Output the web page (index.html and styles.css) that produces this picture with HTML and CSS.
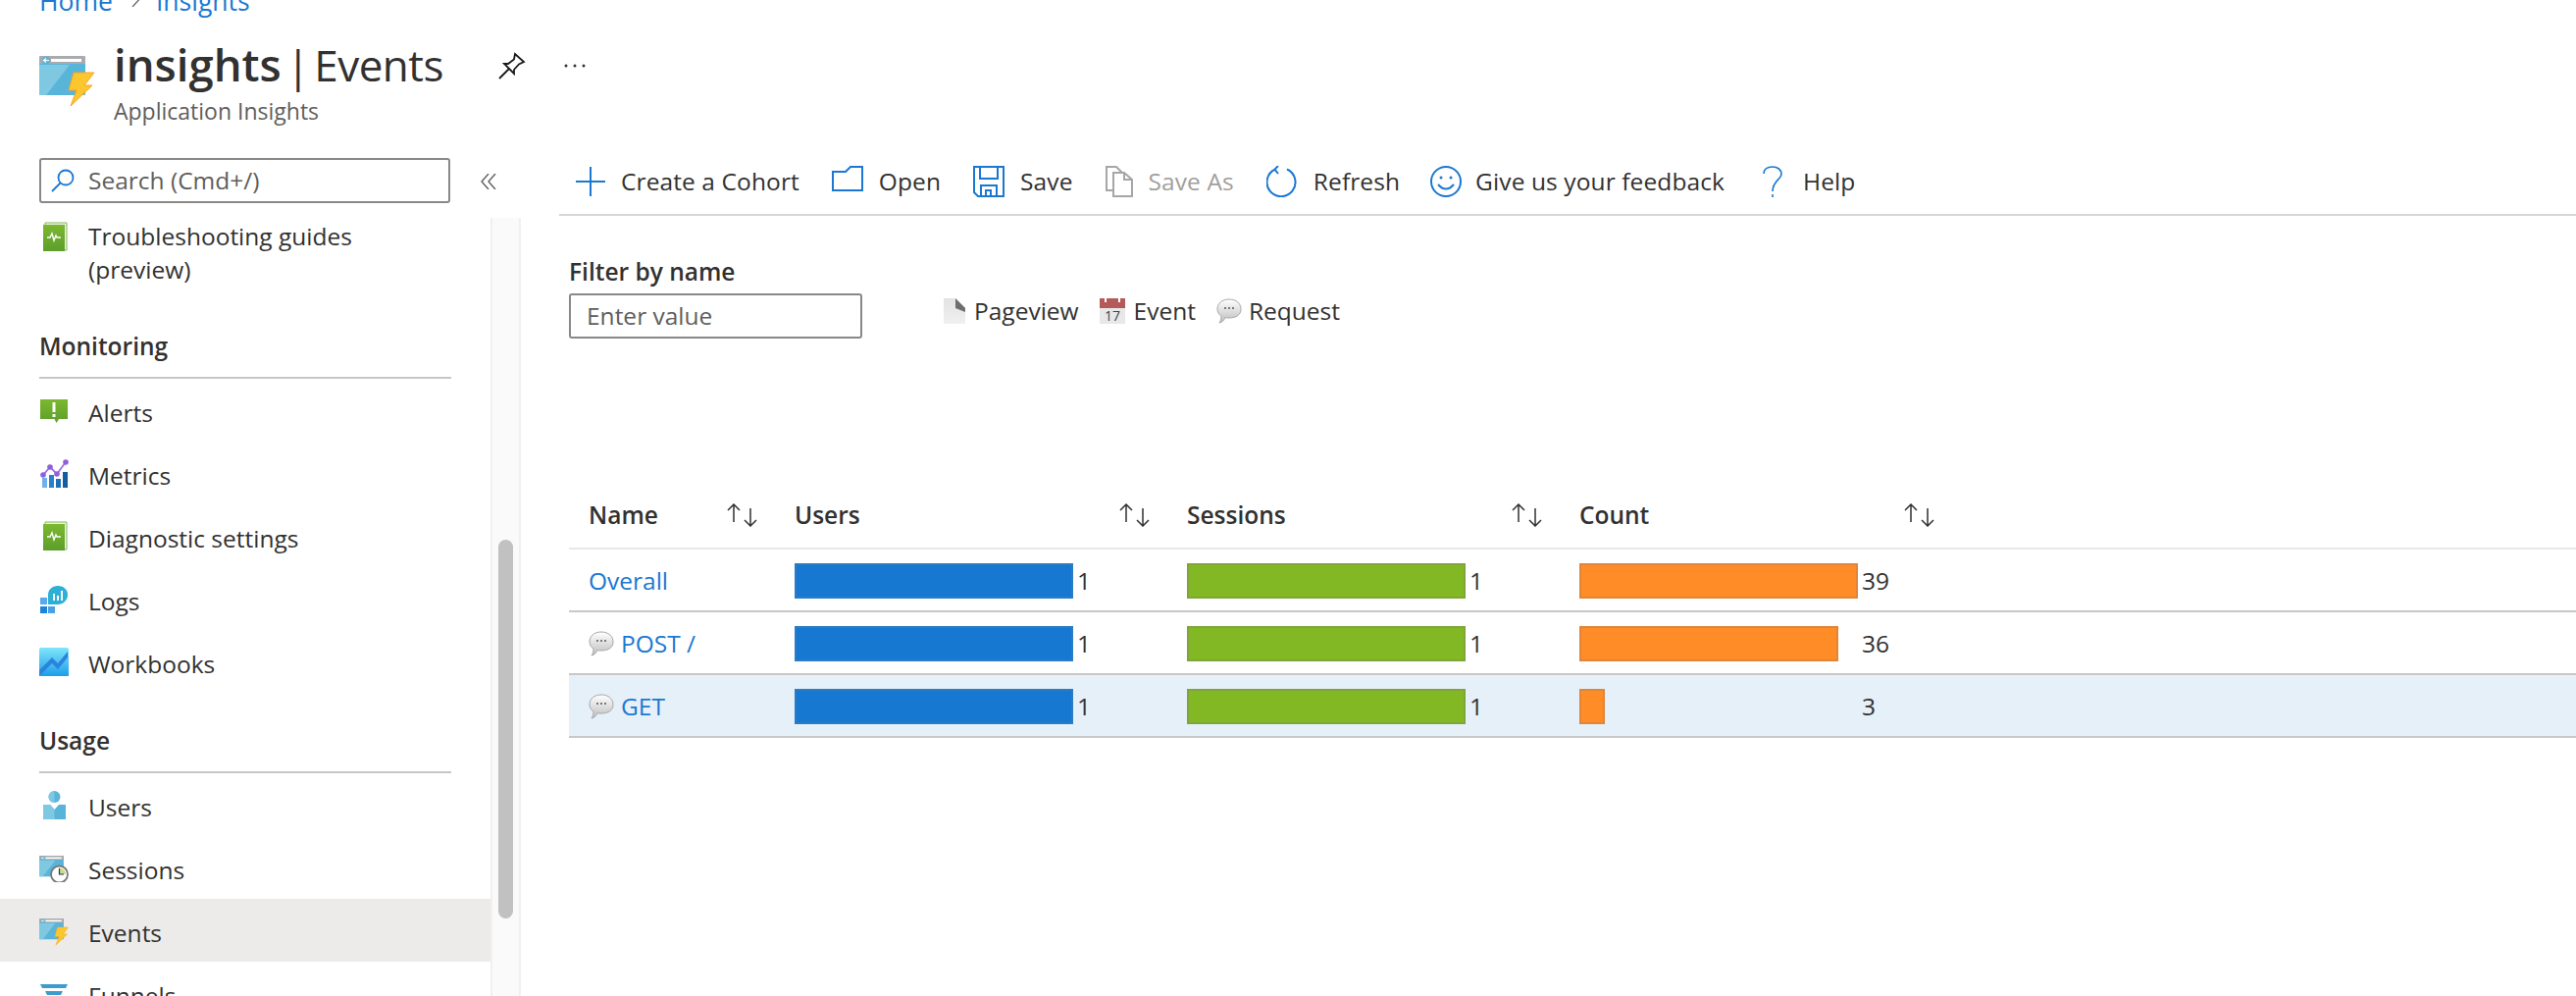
FILE: index.html
```html
<!DOCTYPE html>
<html lang="en">
<head>
    <meta charset="UTF-8">
    <title>insights | Events</title>
    <link rel="stylesheet" href="styles.css">
</head>
<body>
    <svg class="defs" aria-hidden="true">
        <defs>
            <linearGradient id="green" x1="0" y1="0" x2="0" y2="1">
                <stop offset="0" stop-color="#7cb82f"/>
                <stop offset="1" stop-color="#5c9e2b"/>
            </linearGradient>
            <linearGradient id="sky" x1="0" y1="0" x2="0" y2="1">
                <stop offset="0" stop-color="#7fe6fb"/>
                <stop offset="1" stop-color="#1a9be8"/>
            </linearGradient>
            <linearGradient id="bubble" x1="0" y1="0" x2="0" y2="1">
                <stop offset="0" stop-color="#ffffff"/>
                <stop offset="1" stop-color="#bdbdbd"/>
            </linearGradient>
            <linearGradient id="page" x1="0" y1="0" x2="0" y2="1">
                <stop offset="0" stop-color="#e2e2e2"/>
                <stop offset="1" stop-color="#f0f0f0"/>
            </linearGradient>
            <symbol id="book" viewBox="0 0 30 30">
                <path d="M6 1H28V29H6Z" fill="#e8f2dc" stroke="#86b85a"/>
                <path d="M4 3H26V30H4Z" fill="url(#green)"/>
                <path d="M8 16H11L13 12L15 19L17 14L18 16H22" fill="none" stroke="#fff" stroke-width="1.400"/>
            </symbol>
            <symbol id="bubble-icon" viewBox="0 0 26 26">
                <path d="M13 1C20 1 25 5 25 11C25 17 20 20 13 20C11.500 20 10 20 9 19.600C8 22 6 24.500 3 25C4.500 23 5 20.500 5 18C2.500 16.500 1 14 1 11C1 5 6 1 13 1Z" fill="url(#bubble)" stroke="#a8a8a8"/>
                <circle cx="9" cy="10" r="1" fill="#555"/>
                <circle cx="13" cy="10" r="1" fill="#555"/>
                <circle cx="17" cy="10" r="1" fill="#555"/>
            </symbol>
            <symbol id="window" viewBox="0 0 56 51">
                <rect width="47" height="40" rx="1.500" fill="#59b4d9"/>
                <path d="M0 9H31L7 40H1.500Q0 40 0 38.500Z" fill="#7fc8e2"/>
                <path d="M1.500 0H45.500Q47 0 47 1.500V8H0V1.500Q0 0 1.500 0Z" fill="#a9abae"/>
                <circle cx="7" cy="4.500" r="4" fill="#59b4d9"/>
                <path d="M4.500 4.500H10M7 2.500L4.500 4.500L7 6.500" fill="none" stroke="#fff" stroke-width="1.200"/>
                <rect x="12" y="3" width="31" height="3" fill="#fff"/>
            </symbol>
            <symbol id="bolt" viewBox="0 0 56 51">
                <path d="M35 17H56L46 30H54L32 51L38 35H30Z" fill="#fcc72e" stroke="#f6a623" stroke-width="1"/>
            </symbol>
        </defs>
    </svg>

    <header class="blade-head">
        <nav class="crumbs">
            <a>Home</a>
            <svg class="crumb-sep" viewBox="0 0 12 12"><path d="M1 12L11 1" fill="none" stroke="#6b6b6b" stroke-width="1.400"/></svg>
            <a>Insights</a>
        </nav>
        <div class="title-row">
            <svg class="app-icon" viewBox="0 0 56 51"><use href="#window"/><use href="#bolt"/></svg>
            <div class="title-text">
                <h1><b>insights</b> | Events</h1>
                <p>Application Insights</p>
            </div>
            <svg class="pin" viewBox="0 0 28 28"><path d="M17 2L26 10L21 12.500L16 18V22L6 12H10L16 7.500ZM10.500 17.500L1 27" fill="none" stroke="#1b1a19" stroke-width="1.800"/></svg>
            <svg class="more" viewBox="0 0 22 4"><circle cx="2" cy="2" r="1.500"/><circle cx="11" cy="2" r="1.500"/><circle cx="20" cy="2" r="1.500"/></svg>
        </div>
    </header>

    <div class="blade-body">
        <aside class="side">
            <div class="search-row">
                <div class="search-box">
                    <svg class="search-icon" viewBox="0 0 24 24"><circle cx="15" cy="9" r="7.500" fill="none" stroke="#1a78d2" stroke-width="1.800"/><path d="M9.500 14.500L1 23" stroke="#1a78d2" stroke-width="1.800"/></svg>
                    <span>Search (Cmd+/)</span>
                </div>
                <svg class="collapse" viewBox="0 0 16 16"><path d="M8 0L1 8L8 16M15 0L8 8L15 16" fill="none" stroke="#555" stroke-width="1.300"/></svg>
            </div>
            <div class="side-scroll">
                <div class="nav">
                    <div class="nav-item tall">
                        <svg class="nav-icon"><use href="#book"/></svg>
                        <span>Troubleshooting guides<br>(preview)</span>
                    </div>

                    <h2 class="nav-head first">Monitoring</h2>
                    <div class="nav-item">
                        <svg class="nav-icon" viewBox="0 0 30 30"><path d="M1 4H29V24H20L17.500 28L15.500 24H1Z" fill="url(#green)"/><rect x="13.500" y="7" width="3" height="10" fill="#fff"/><rect x="13.500" y="19" width="3" height="3" fill="#fff"/></svg>
                        <span>Alerts</span>
                    </div>
                    <div class="nav-item">
                        <svg class="nav-icon" viewBox="0 0 30 30">
                            <rect x="3" y="20" width="5" height="10" fill="#6fb1ee"/>
                            <rect x="10" y="17" width="5" height="13" fill="#2a7fc9"/>
                            <rect x="17" y="21" width="5" height="9" fill="#1f6fb5"/>
                            <rect x="24" y="14" width="5" height="16" fill="#125e9f"/>
                            <path d="M4 17L11 9L18 16L27 4" fill="none" stroke="#9a6fe0" stroke-width="1.800"/>
                            <circle cx="4" cy="17" r="2.800" fill="#8f5fdc"/>
                            <circle cx="11" cy="9" r="2.800" fill="#8f5fdc"/>
                            <circle cx="18" cy="16" r="2.800" fill="#8f5fdc"/>
                            <circle cx="27" cy="4" r="2.800" fill="#8f5fdc"/>
                        </svg>
                        <span>Metrics</span>
                    </div>
                    <div class="nav-item">
                        <svg class="nav-icon"><use href="#book"/></svg>
                        <span>Diagnostic settings</span>
                    </div>
                    <div class="nav-item">
                        <svg class="nav-icon" viewBox="0 0 30 30">
                            <rect x="1" y="14" width="7" height="7" fill="#5ba8ea"/>
                            <rect x="1" y="23" width="7" height="7" fill="#1f83dc"/>
                            <rect x="9" y="23" width="7" height="7" fill="#4a9fe6"/>
                            <path d="M19 2C25 2 29 6 29 11C29 17 24 21 19 21H9V11C9 6 13 2 19 2Z" fill="#2bb0d6"/>
                            <rect x="14" y="10" width="2" height="7" fill="#fff"/>
                            <rect x="18" y="12" width="2" height="5" fill="#fff"/>
                            <rect x="22" y="7" width="2" height="10" fill="#fff"/>
                        </svg>
                        <span>Logs</span>
                    </div>
                    <div class="nav-item">
                        <svg class="nav-icon" viewBox="0 0 30 30">
                            <rect y="1" width="30" height="30" rx="2" fill="url(#sky)"/>
                            <path d="M0 24L13 11L19 17L29 5V11L19 23L13 17L0 30Z" fill="#2a84dc"/>
                        </svg>
                        <span>Workbooks</span>
                    </div>

                    <h2 class="nav-head">Usage</h2>
                    <div class="nav-item">
                        <svg class="nav-icon" viewBox="0 0 30 30">
                            <circle cx="15.500" cy="7" r="6" fill="#59b4d9"/>
                            <path d="M4 15H11L15.500 20L20 15H27V31H4Z" fill="#59b4d9"/>
                            <path d="M15.500 1A6 6 0 0 0 15.500 13ZM4 15H11L15.500 20V31H4Z" fill="#7fc8e2"/>
                        </svg>
                        <span>Users</span>
                    </div>
                    <div class="nav-item">
                        <svg class="nav-icon" viewBox="0 0 30 30">
                            <g transform="translate(0 3) scale(0.53)"><use href="#window" width="56" height="51"/></g>
                            <circle cx="20.500" cy="22" r="8.500" fill="#fff" stroke="#7a7a7a" stroke-width="1.800"/>
                            <path d="M20.500 22V15.500A6.500 6.500 0 0 1 27 22Z" fill="#c7dc8b"/>
                            <path d="M20.500 16V22H25" fill="none" stroke="#333" stroke-width="1.200"/>
                        </svg>
                        <span>Sessions</span>
                    </div>
                    <div class="nav-item selected">
                        <svg class="nav-icon" viewBox="0 0 30 30">
                            <g transform="translate(0 3) scale(0.53)"><use href="#window" width="56" height="51"/><use href="#bolt" width="56" height="51"/></g>
                        </svg>
                        <span>Events</span>
                    </div>
                    <div class="nav-item">
                        <svg class="nav-icon" viewBox="0 0 30 30">
                            <path d="M1 6H29L27 10H3Z" fill="#3c9dcc"/>
                            <path d="M6 13H24L22 17H8Z" fill="#3c9dcc"/>
                            <path d="M10 20H20L18 24H12Z" fill="#3c9dcc"/>
                        </svg>
                        <span>Funnels</span>
                    </div>
                </div>
                <div class="scroll-track"><div class="scroll-thumb"></div></div>
            </div>
        </aside>

        <main class="content">
            <div class="toolbar">
                <div class="tool">
                    <svg class="tool-icon w30" viewBox="0 0 30 32"><path d="M15 1V31M0 16H30" fill="none" stroke="#1a78d2" stroke-width="2"/></svg>
                    <span>Create a Cohort</span>
                </div>
                <div class="tool">
                    <svg class="tool-icon w32" viewBox="0 0 32 32"><path d="M1 6H14L19 1H31V25H1Z" fill="none" stroke="#1a78d2" stroke-width="2"/></svg>
                    <span>Open</span>
                </div>
                <div class="tool">
                    <svg class="tool-icon w32" viewBox="0 0 32 32"><path d="M1 1H31V31H5L1 27ZM7 1V13H25V1M8 31V20H24V31M13 31V25H18V31" fill="none" stroke="#1a78d2" stroke-width="2"/></svg>
                    <span>Save</span>
                </div>
                <div class="tool off">
                    <svg class="tool-icon w28" viewBox="0 0 28 32"><path d="M8 25H1V1H11L17 7M8 7H19L27 14V31H8ZM19 7V14H27" fill="none" stroke="#a6a6a6" stroke-width="2"/></svg>
                    <span>Save As</span>
                </div>
                <div class="tool">
                    <svg class="tool-icon w32" viewBox="0 0 32 32"><path d="M21 3.500A14.500 14.500 0 1 1 9 3.500M12 0L8.500 3.500L12 8" fill="none" stroke="#1a78d2" stroke-width="2"/></svg>
                    <span>Refresh</span>
                </div>
                <div class="tool tight">
                    <svg class="tool-icon w32" viewBox="0 0 32 32"><circle cx="16" cy="16" r="15" fill="none" stroke="#1a78d2" stroke-width="2"/><circle cx="11" cy="12" r="1.500" fill="#1a78d2"/><circle cx="21" cy="12" r="1.500" fill="#1a78d2"/><path d="M8 19Q16 28 24 19" fill="none" stroke="#1a78d2" stroke-width="2"/></svg>
                    <span>Give us your feedback</span>
                </div>
                <div class="tool help">
                    <svg class="tool-icon w20" viewBox="0 0 20 32"><path d="M1 8C1 3 5 1 10 1C15 1 19 4 19 8C19 14 10 15 10 26M10 29V32" fill="none" stroke="#1a78d2" stroke-width="1.600"/></svg>
                    <span>Help</span>
                </div>
            </div>

            <div class="filter-row">
                <div class="filter">
                    <label>Filter by name</label>
                    <div class="filter-input">Enter value</div>
                </div>
                <div class="legend">
                    <div class="legend-item">
                        <svg class="legend-page" viewBox="0 0 22 26"><path d="M0 0H12L22 10V26H0Z" fill="url(#page)"/><path d="M12 0L22 10V14L12 10Z" fill="#6d6d6d"/></svg>
                        <span>Pageview</span>
                    </div>
                    <div class="legend-item">
                        <svg class="legend-cal" viewBox="0 0 26 26"><rect width="26" height="26" fill="#e8e8e8"/><rect width="26" height="10" fill="#b45a5a"/><rect x="5" width="2" height="4" fill="#fff"/><rect x="19" width="2" height="4" fill="#fff"/><text class="cal-num" x="13" y="23" text-anchor="middle">17</text></svg>
                        <span>Event</span>
                    </div>
                    <div class="legend-item tight">
                        <svg class="legend-bubble"><use href="#bubble-icon"/></svg>
                        <span>Request</span>
                    </div>
                </div>
            </div>

            <div class="table">
                <div class="row head">
                    <div class="cell name"><span>Name</span><svg class="sort" viewBox="0 0 32 24"><path d="M8 19V1M2 7L8 1L14 7M25 5V23M19 17L25 23L31 17" fill="none" stroke="#323130" stroke-width="1.500"/></svg></div>
                    <div class="cell"><span>Users</span><svg class="sort" viewBox="0 0 32 24"><path d="M8 19V1M2 7L8 1L14 7M25 5V23M19 17L25 23L31 17" fill="none" stroke="#323130" stroke-width="1.500"/></svg></div>
                    <div class="cell"><span>Sessions</span><svg class="sort" viewBox="0 0 32 24"><path d="M8 19V1M2 7L8 1L14 7M25 5V23M19 17L25 23L31 17" fill="none" stroke="#323130" stroke-width="1.500"/></svg></div>
                    <div class="cell"><span>Count</span><svg class="sort" viewBox="0 0 32 24"><path d="M8 19V1M2 7L8 1L14 7M25 5V23M19 17L25 23L31 17" fill="none" stroke="#323130" stroke-width="1.500"/></svg></div>
                </div>
                <div class="row">
                    <div class="cell name"><a>Overall</a></div>
                    <div class="cell bar-cell"><div class="track"><div class="bar blue" style="width:284px"></div></div><span>1</span></div>
                    <div class="cell bar-cell"><div class="track"><div class="bar green" style="width:284px"></div></div><span>1</span></div>
                    <div class="cell bar-cell"><div class="track"><div class="bar orange" style="width:284px"></div></div><span>39</span></div>
                </div>
                <div class="row">
                    <div class="cell name req"><svg class="row-icon"><use href="#bubble-icon"/></svg><a>POST /</a></div>
                    <div class="cell bar-cell"><div class="track"><div class="bar blue" style="width:284px"></div></div><span>1</span></div>
                    <div class="cell bar-cell"><div class="track"><div class="bar green" style="width:284px"></div></div><span>1</span></div>
                    <div class="cell bar-cell"><div class="track"><div class="bar orange" style="width:264px"></div></div><span>36</span></div>
                </div>
                <div class="row picked">
                    <div class="cell name req"><svg class="row-icon"><use href="#bubble-icon"/></svg><a>GET</a></div>
                    <div class="cell bar-cell"><div class="track"><div class="bar blue" style="width:284px"></div></div><span>1</span></div>
                    <div class="cell bar-cell"><div class="track"><div class="bar green" style="width:284px"></div></div><span>1</span></div>
                    <div class="cell bar-cell"><div class="track"><div class="bar orange" style="width:26px"></div></div><span>3</span></div>
                </div>
            </div>
        </main>
    </div>
</body>
</html>
```

FILE: styles.css
```css
* {
    box-sizing: border-box;
}
html, body {
    height: 100%;
}
body {
    margin: 0;
    height: 1015px;
    overflow: hidden;
    background-color: #fff;
    color: #323130;
    font-family: "Open Sans", "Noto Sans", sans-serif;
    font-size: 24.5px;
    line-height: 34px;
    display: flex;
    flex-direction: column;
}
a {
    color: #1a78d2;
}
.defs {
    display: block;
    width: 0;
    height: 0;
    overflow: hidden;
}

/* header */
.blade-head {
    height: 140px;
    flex: none;
    padding-left: 40px;
    overflow: hidden;
}
.crumbs {
    display: flex;
    align-items: center;
    height: 34px;
    margin-top: -16px;
    font-size: 26.5px;
}
.crumb-sep {
    width: 12px;
    height: 12px;
    margin: 0 13px 0 19px;
}
.title-row {
    display: flex;
    align-items: flex-start;
    margin-top: 21px;
}
.app-icon {
    width: 56px;
    height: 51px;
    margin-top: 18px;
    flex: none;
}
.title-text {
    margin-left: 20px;
    width: 392px;
}
.title-text h1 {
    margin: 0;
    font-size: 44px;
    font-weight: 400;
    letter-spacing: -0.5px;
    word-spacing: -6px;
    line-height: 52px;
    white-space: nowrap;
}
.title-text h1 b {
    font-size: 45.5px;
    font-weight: 600;
    letter-spacing: 0;
}
.title-text p {
    margin: 6px 0 0;
    font-size: 23px;
    line-height: 30px;
    word-spacing: 0;
    color: #605e5c;
}
.pin {
    width: 28px;
    height: 28px;
    margin-top: 14px;
}
.more {
    width: 22px;
    height: 4px;
    margin: 26px 0 0 39px;
    fill: #323130;
}

.blade-body {
    flex: 1;
    display: flex;
    min-height: 0;
}

/* left menu */
.side {
    width: 570px;
    flex: none;
    display: flex;
    flex-direction: column;
}
.search-row {
    height: 82px;
    flex: none;
    padding: 21px 0 0 40px;
    display: flex;
    align-items: flex-start;
}
.search-box {
    width: 419px;
    height: 46px;
    border: 2px solid #8a8886;
    border-radius: 3px;
    padding-left: 10px;
    display: flex;
    align-items: center;
    gap: 14px;
    color: #605e5c;
}
.search-icon {
    width: 24px;
    height: 24px;
}
.collapse {
    width: 16px;
    height: 16px;
    margin: 16px 0 0 31px;
}
.side-scroll {
    flex: 1;
    display: flex;
    min-height: 0;
}
.nav {
    width: 500px;
    flex: none;
}
.nav-item {
    height: 64px;
    padding: 6px 0 0 40px;
    display: flex;
    align-items: center;
    gap: 20px;
    white-space: nowrap;
}
.nav-item.tall {
    height: auto;
    padding-top: 2px;
    align-items: flex-start;
}
.nav-item.tall .nav-icon {
    margin-top: 2px;
}
.nav-item.selected {
    background-color: #edebe9;
}
.nav-icon {
    width: 30px;
    height: 30px;
    flex: none;
    margin-top: -6px;
}
.nav-head {
    margin: 32px 40px 0;
    padding-bottom: 14px;
    border-bottom: 2px solid #c8c6c4;
    font-size: 24.5px;
    font-weight: 600;
    line-height: 34px;
}
.nav-head.first {
    margin-top: 44px;
}
.scroll-track {
    width: 31px;
    flex: none;
    background-color: #fafafa;
    border-left: 2px solid #f0f0f0;
    border-right: 2px solid #f0f0f0;
    padding: 328px 6px 0;
}
.scroll-thumb {
    height: 386px;
    border-radius: 8px;
    background-color: #c1c1c1;
}

/* toolbar */
.content {
    flex: 1;
    min-width: 0;
}
.toolbar {
    height: 80px;
    padding: 12px 0 0 17px;
    border-bottom: 2px solid #d6d6d6;
    display: flex;
    align-items: center;
    gap: 33px;
    white-space: nowrap;
    letter-spacing: 0.1px;
}
.tool {
    display: flex;
    align-items: center;
    gap: 16px;
}
.tool.tight {
    gap: 14px;
    margin-left: -2px;
}
.tool.help {
    gap: 21px;
    margin-left: 6px;
}
.tool.off {
    color: #a19f9d;
}
.tool-icon {
    height: 32px;
    flex: none;
}
.w30 { width: 30px; }
.w32 { width: 32px; }
.w28 { width: 28px; }
.w20 { width: 20px; }

/* filter */
.filter-row {
    padding: 40px 0 0 10px;
    display: flex;
    align-items: flex-end;
    gap: 83px;
}
.filter label {
    display: block;
    font-weight: 600;
    margin-bottom: 5px;
}
.filter-input {
    width: 299px;
    height: 46px;
    border: 2px solid #8a8886;
    border-radius: 3px;
    padding-left: 16px;
    display: flex;
    align-items: center;
    color: #605e5c;
}
.legend {
    display: flex;
    align-items: center;
    gap: 21px;
    margin-bottom: 11px;
}
.legend-item {
    display: flex;
    align-items: center;
    gap: 9px;
}
.legend-item.tight {
    gap: 7px;
}
.legend-page {
    width: 22px;
    height: 26px;
}
.legend-cal {
    width: 26px;
    height: 26px;
}
.cal-num {
    font-size: 14px;
    fill: #444;
}
.legend-bubble {
    width: 26px;
    height: 26px;
}

/* table */
.table {
    margin: 146px 0 0 10px;
}
.row {
    display: grid;
    grid-template-columns: 230px 400px 400px 400px 1fr;
    height: 64px;
    padding-top: 2px;
    border-bottom: 2px solid #c8c8c8;
    align-items: center;
}
.row.head {
    height: 69px;
    padding-top: 0;
    border-bottom-color: #e8e8e8;
    font-weight: 600;
}
.row.picked {
    background-color: #e6f0f9;
}
.cell {
    display: flex;
    align-items: center;
}
.cell.name {
    padding-left: 20px;
}
.cell.name.req {
    gap: 7px;
}
.head .cell {
    justify-content: space-between;
    padding-right: 38px;
}
.sort {
    width: 32px;
    height: 24px;
}
.row-icon {
    width: 26px;
    height: 26px;
}
.track {
    width: 284px;
    margin-right: 4px;
}
.bar {
    height: 36px;
    border: 2px solid;
}
.bar.blue {
    background-color: #1678d0;
    border-color: #2b7cc4;
}
.bar.green {
    background-color: #82b823;
    border-color: #7fa53a;
}
.bar.orange {
    background-color: #ff8c26;
    border-color: #e0853a;
}
```
